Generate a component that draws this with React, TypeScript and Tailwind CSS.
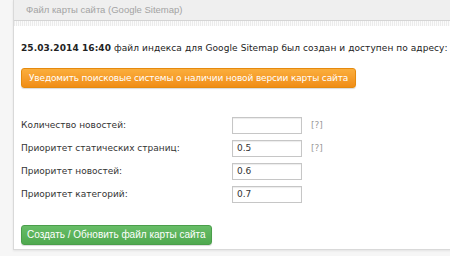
import React from 'react';

const rows = [
  { label: 'Количество новостей:', value: '', help: true },
  { label: 'Приоритет статических страниц:', value: '0.5', help: true },
  { label: 'Приоритет новостей:', value: '0.6', help: false },
  { label: 'Приоритет категорий:', value: '0.7', help: false },
];

export default function App() {
  return (
    <div className="w-[450px] h-[256px] overflow-hidden bg-[#f6f6f6] pl-[13px] font-['DejaVu_Sans',Verdana,sans-serif]">
      <div className="w-[460px] h-[250px] bg-white border-l border-b border-[#d9d9d9] shadow-[0_1px_2px_rgba(0,0,0,0.08)]">
        {/* header */}
        <div className="h-[21px] bg-[#efefef] border-b border-[#d4d4d4] flex items-center pl-[12px] text-[#a3a3a3] font-['Liberation_Sans',Tahoma,sans-serif]">
          <span className="text-[9.5px]">Файл карты сайта (Google Sitemap)</span>
        </div>
        <div className="h-[5px] bg-[repeating-linear-gradient(90deg,#e6e6e6_0px,#e6e6e6_1px,#fafafa_1px,#fafafa_2px)] opacity-80" />

        <div className="pl-[7px] pt-[15px]">
          <p className="text-[9px] leading-[14px] text-[#222] whitespace-nowrap tracking-[0.08px]">
            <b>25.03.2014 16:40</b> файл индекса для Google Sitemap был создан и доступен по адресу:
          </p>

          <button className="mt-[13px] h-[20px] px-[7px] rounded-[3px] border border-[#e58a0e] bg-gradient-to-b from-[#fbae3c] to-[#f08d14] text-white text-[9px] leading-[18px] tracking-[-0.15px] whitespace-nowrap shadow-[0_1px_1px_rgba(0,0,0,0.15)]">
            Уведомить поисковые системы о наличии новой версии карты сайта
          </button>

          <div className="mt-[29px] flex flex-col gap-[6px]">
            {rows.map((r) => (
              <div key={r.label} className="flex items-center h-[17px]">
                <span className="w-[211px] text-[9px] text-[#333]">{r.label}</span>
                <div className="w-[70px] h-[17px] border border-[#c6c6c6] bg-white shadow-[inset_0_1px_1px_rgba(0,0,0,0.08)] px-[4px] text-[9px] leading-[15px] text-[#333]">
                  {r.value}
                </div>
                {r.help && <span className="ml-[9px] text-[9px] text-[#999]">[?]</span>}
              </div>
            ))}
          </div>

          <button className="mt-[22px] h-[20px] px-[5px] rounded-[3px] border border-[#4a9e4a] bg-gradient-to-b from-[#67bd67] to-[#4fa94f] text-white text-[10px] leading-[18px] font-['Liberation_Sans',Arial,sans-serif] whitespace-nowrap shadow-[0_1px_1px_rgba(0,0,0,0.15)]">
            Создать / Обновить файл карты сайта
          </button>
        </div>
      </div>
    </div>
  );
}
